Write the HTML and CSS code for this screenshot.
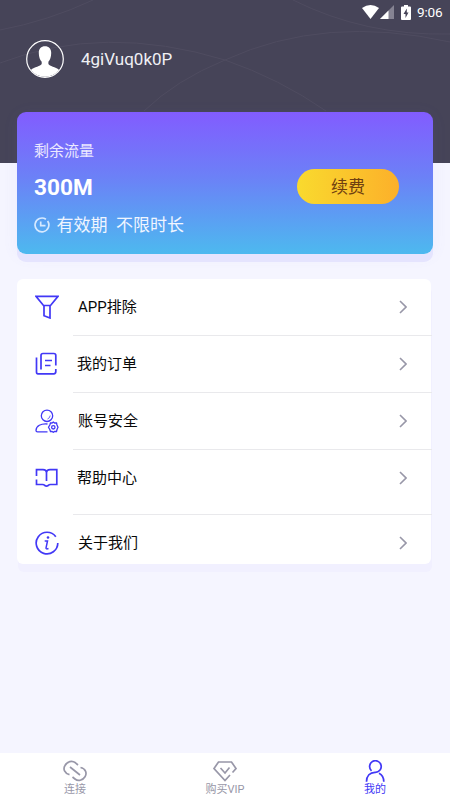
FILE: index.html
```html
<!DOCTYPE html>
<html lang="zh-CN">
<head>
<meta charset="utf-8">
<meta name="viewport" content="width=device-width, initial-scale=1">
<title>我的</title>
<link rel="stylesheet" href="styles.css">
</head>
<body>
<div class="app">
  <header class="header">
    <svg class="arcs" viewBox="0 0 450 163" fill="none" stroke="#4f4c60" stroke-width="1">
      <path d="M0 30Q48 21 93 0M0 63Q104 23 225 60Q280 79 326 111M144 111Q176 80 225 60Q325 14 450 42M293 0Q365 36 450 34"/>
    </svg>
    <div class="status">
      <svg class="wifi" viewBox="0 0 17 14"><path d="M0 3Q8.500-3 17 3L8.500 14Z" fill="#fff"/></svg>
      <svg class="signal" viewBox="0 0 14 14"><path d="M14 0V14H0Z" fill="#858392"/><path d="M8.500 5.500V14H0Z" fill="#fff"/></svg>
      <svg class="battery" viewBox="0 0 10 15"><path d="M3 0H7V1.500H9Q10 1.500 10 2.500V14Q10 15 9 15H1Q0 15 0 14V2.500Q0 1.500 1 1.500H3Z" fill="#fff"/><path d="M5.800 3.500L2.500 9H4.500V13L7.500 7.500H5.800Z" fill="#454357"/></svg>
      <span class="clock">9:06</span>
    </div>
    <div class="profile">
      <svg class="avatar" viewBox="0 0 38 38"><circle cx="19" cy="19" r="18.300" fill="none" stroke="#fff" stroke-width="1.200"/><path d="M19 6.300C23 6.300 25.300 9 25.200 13C25.200 17 24 20 22.400 21.800V24C23.500 26.500 29.500 26.500 33.100 30A18.300 18.300 0 0 1 4.900 30C8.500 26.500 14.500 26.500 15.700 24V21.800C14 20 12.800 17 12.800 13C12.700 9 15 6.300 19 6.300Z" fill="#fff"/></svg>
      <span class="username">4giVuq0k0P</span>
    </div>
  </header>
  <main class="content">
    <section class="plan">
      <div class="plan-label">剩余流量</div>
      <div class="plan-amount">300M</div>
      <div class="plan-expiry">
        <svg class="expiry-icon" viewBox="0 0 16 16" fill="none" stroke="#d6e9ff" stroke-width="1.700"><path d="M13.600 4A6.900 6.900 0 1 1 11.900 2.300M6.700 4.500V8.600H11.500"/></svg>
        <span>有效期&nbsp; 不限时长</span>
      </div>
      <button class="renew">续费</button>
    </section>
    <nav class="menu">
      <a class="row">
        <svg class="icon" viewBox="0 0 24 24"><path d="M1 1.300H23L15.500 10.500H8.500ZM9 10.500V20.700L15 23V10.500"/></svg>
        <span class="row-text">APP排除</span><svg class="chevron" viewBox="0 0 8 14"><path d="M1 1L7 7L1 13"/></svg>
      </a>
      <a class="row orders">
        <svg class="icon" viewBox="0 0 24 24"><path d="M6 17.500V3.500Q6 1.500 8 1.500H18.800Q20.800 1.500 20.800 3.500V13.500M20.800 17V19.500Q20.800 21.800 18.800 21.800H3Q1.500 21.800 1.500 20V5.500M10 8.500H17M10 13.500H15.500"/></svg>
        <span class="row-text">我的订单</span><svg class="chevron" viewBox="0 0 8 14"><path d="M1 1L7 7L1 13"/></svg>
      </a>
      <a class="row">
        <svg class="icon thin" viewBox="0 0 24 24"><circle cx="12" cy="6.800" r="5.700"/><path d="M12.500 10Q15 9 15.200 6.500" stroke-width=".8"/><path d="M12.500 15C6 14.300 1 17 1 21.500Q1 22.800 2.500 22.800H12.500"/><path d="M15.500 14H17L18.300 13L19.600 14H21.500L22 16L23 18.300L22 20.500L21.500 22.500H19.600L18.300 23.300L17 22.500H15.500L14.800 20.500L13.500 18.300L14.800 16Z"/><circle cx="18.300" cy="18.300" r="1.700"/></svg>
        <span class="row-text">账号安全</span><svg class="chevron" viewBox="0 0 8 14"><path d="M1 1L7 7L1 13"/></svg>
      </a>
      <a class="row help">
        <svg class="icon" viewBox="0 0 24 24"><path d="M1.500 10V3.700H8Q11.500 3.700 11.500 6.500V15M11.500 6.500Q11.500 3.700 15 3.700H21.800V18.500H15.500Q14 18.500 13.200 19.500Q11.500 20.700 9.800 19.500Q9 18.500 7.500 18.500H1.500V13.500"/></svg>
        <span class="row-text">帮助中心</span><svg class="chevron" viewBox="0 0 8 14"><path d="M1 1L7 7L1 13"/></svg>
      </a>
      <a class="row about">
        <svg class="icon" viewBox="0 0 24 24"><path d="M20.800 5.800A10.800 10.800 0 1 0 22.800 12"/><path d="M9.700 10H12.500L11 17Q11 18.500 13.500 17.500" stroke-width="1.500"/><circle cx="13" cy="6.500" r="1.300" fill="#4238f6" stroke="none"/></svg>
        <span class="row-text">关于我们</span><svg class="chevron" viewBox="0 0 8 14"><path d="M1 1L7 7L1 13"/></svg>
      </a>
    </nav>
  </main>
  <footer class="tabs">
    <a class="tab"><svg class="tab-icon" viewBox="0 0 24 22"><path d="M6.500 14.700C1.500 13.500 -.2 9 2 5.500C4.300 1.300 9 .2 12.500 2.800L15 5M17.500 7.500C22.500 8.500 24.300 13 22 16.700C19.700 20.500 15 21.500 12 19L9.500 17M7 7L17 15"/></svg><span>连接</span></a>
    <a class="tab"><svg class="tab-icon" viewBox="0 0 24 22"><path d="M19.500 12.500L23 8.500L18.500 2H5.500L1 8.500L12 20.500L17 15M7.500 8L12 13L16.500 7.500"/></svg><span>购买VIP</span></a>
    <a class="tab active"><svg class="tab-icon" viewBox="0 0 24 22"><path d="M8.500 10.800A5.800 5.800 0 1 1 12 12.300C7 12.500 3.500 16 3.500 21.800M16 13.300Q20.700 15.500 20.800 21.800"/></svg><span>我的</span></a>
  </footer>
</div>
</body>
</html>
```

FILE: styles.css
```css
* { box-sizing: border-box; }
body {
  margin: 0;
  font-family: Roboto, "Noto Sans CJK SC", sans-serif;
  background: #f5f5ff;
}
.app { height: 800px; display: flex; flex-direction: column; overflow: hidden; }
.header { position: relative; flex: none; height: 163px; background: #464458; color: #fff; }
.arcs { position: absolute; inset: 0; width: 450px; height: 163px; }
.status { position: relative; height: 24px; padding: 0 7px 0 0; display: flex; align-items: center; justify-content: flex-end; }
.wifi { width: 17px; height: 14px; margin-right: 1px; }
.signal { width: 14px; height: 14px; margin-right: 7px; }
.battery { width: 10px; height: 15px; margin-right: 6px; }
.clock { font-size: 13.6px; font-weight: 450; letter-spacing: -.2px; line-height: 24px; width: 26px; white-space: nowrap; }
.profile { position: relative; display: flex; align-items: center; gap: 17px; padding: 16px 26px 0; }
.avatar { width: 38px; height: 38px; }
.username { font-size: 17px; line-height: 24px; color: #f0f0f4; }
.content { position: relative; flex: 1; margin-top: -51px; padding: 0 17px; }
.plan {
  position: relative;
  height: 142px;
  padding: 27px 17px 0;
  border-radius: 9px;
  background: linear-gradient(#825cff, #6c80f7 45%, #4db9ef);
  box-shadow: 0 8px 0 #e5e4fe, 0 2px 16px rgba(120, 110, 240, .07);
  color: #fff;
}
.plan-label { font-size: 15px; line-height: 24px; color: #ece9ff; }
.plan-amount { margin-top: 11px; font-size: 22.6px; line-height: 28px; font-weight: 700; }
.plan-expiry { display: flex; align-items: center; gap: 6.5px; margin-top: 10px; font-size: 17px; line-height: 26px; color: #f0f5ff; }
.expiry-icon { width: 16px; height: 16px; }
.renew {
  position: absolute; right: 34px; top: 57px;
  width: 102px; height: 35px; padding: 0;
  border: 0; border-radius: 18px;
  background: linear-gradient(90deg, #f9da2e, #fcb02a);
  color: #704010; font: 17px/34px Roboto, "Noto Sans CJK SC", sans-serif;
}
.menu {
  width: 414px; height: 285px; margin-top: 24.5px;
  border-radius: 6px; background: #fff;
  box-shadow: 1px 8px 0 #f1f0ff;
}
.row { position: relative; display: flex; align-items: center; height: 57px; padding: 0 24px 0 18px; }
.row:not(:last-child)::after { content: ""; position: absolute; left: 56px; right: -1px; bottom: -.5px; height: 1px; background: #e9e9ec; }
.help { height: 65px; padding-bottom: 8px; }
.about { height: 57px; }
.icon { width: 24px; height: 24px; margin-top: -1px; fill: none; stroke: #4238f6; stroke-width: 1.7; }
.icon.thin { stroke-width: 1.3; }
.row-text { flex: 1; margin-left: 19px; font-size: 15px; line-height: 24px; color: #090909; }
.orders .row-text, .help .row-text { margin-left: 18px; }
.chevron { width: 8px; height: 14px; margin-top: -1px; fill: none; stroke: #9897a8; stroke-width: 1.6; }
.tabs { flex: none; height: 47px; display: grid; grid-template-columns: repeat(3, 1fr); background: #fff; }
.tab { display: flex; flex-direction: column; align-items: center; padding-top: 7px; font-size: 11px; line-height: 16px; color: #9897a8; }
.tab-icon { width: 24px; height: 22px; fill: none; stroke: currentColor; stroke-width: 1.7; }
.active { color: #4238f6; }
```
